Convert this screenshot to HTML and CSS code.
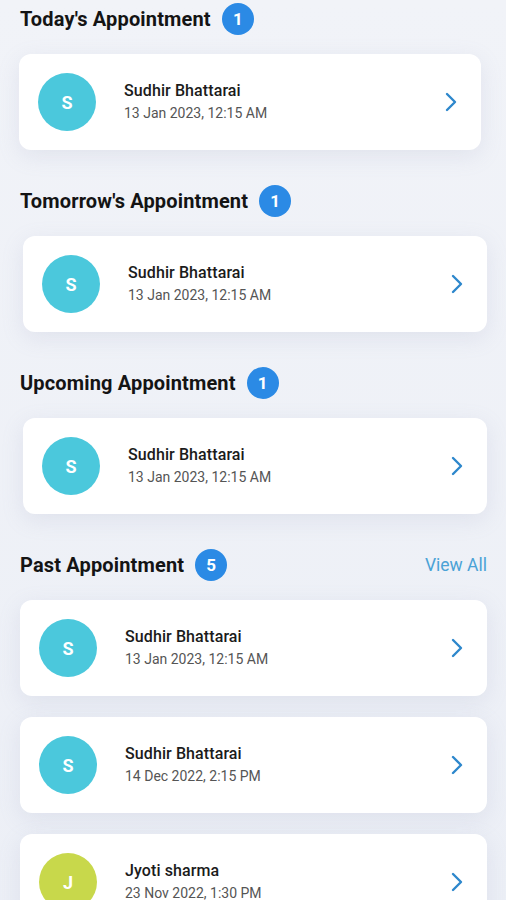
FILE: index.html
```html
<!DOCTYPE html>
<html lang="en">

<head>
    <meta charset="utf-8">
    <title>Appointments</title>
    <link rel="stylesheet" href="styles.css">
</head>

<body>
    <div id="app">
        <section class="section section--today">
            <div class="section-head">
                <h2>Today's Appointment</h2>
                <span class="badge">1</span>
            </div>
            <div class="card">
                <div class="avatar">S</div>
                <div class="info">
                    <div class="name">Sudhir Bhattarai</div>
                    <div class="date">13 Jan 2023, 12:15 AM</div>
                </div>
                <svg class="chevron" viewBox="0 0 12 20"><path d="M2 2l8 8-8 8"/></svg>
            </div>
        </section>

        <section class="section section--shifted">
            <div class="section-head">
                <h2>Tomorrow's Appointment</h2>
                <span class="badge">1</span>
            </div>
            <div class="card">
                <div class="avatar">S</div>
                <div class="info">
                    <div class="name">Sudhir Bhattarai</div>
                    <div class="date">13 Jan 2023, 12:15 AM</div>
                </div>
                <svg class="chevron" viewBox="0 0 12 20"><path d="M2 2l8 8-8 8"/></svg>
            </div>
        </section>

        <section class="section section--shifted">
            <div class="section-head">
                <h2>Upcoming Appointment</h2>
                <span class="badge">1</span>
            </div>
            <div class="card">
                <div class="avatar">S</div>
                <div class="info">
                    <div class="name">Sudhir Bhattarai</div>
                    <div class="date">13 Jan 2023, 12:15 AM</div>
                </div>
                <svg class="chevron" viewBox="0 0 12 20"><path d="M2 2l8 8-8 8"/></svg>
            </div>
        </section>

        <section class="section">
            <div class="section-head">
                <h2>Past Appointment</h2>
                <span class="badge">5</span>
                <a class="view-all" href="#">View All</a>
            </div>
            <div class="card">
                <div class="avatar">S</div>
                <div class="info">
                    <div class="name">Sudhir Bhattarai</div>
                    <div class="date">13 Jan 2023, 12:15 AM</div>
                </div>
                <svg class="chevron" viewBox="0 0 12 20"><path d="M2 2l8 8-8 8"/></svg>
            </div>
            <div class="card">
                <div class="avatar">S</div>
                <div class="info">
                    <div class="name">Sudhir Bhattarai</div>
                    <div class="date">14 Dec 2022, 2:15 PM</div>
                </div>
                <svg class="chevron" viewBox="0 0 12 20"><path d="M2 2l8 8-8 8"/></svg>
            </div>
            <div class="card">
                <div class="avatar avatar--lime">J</div>
                <div class="info">
                    <div class="name">Jyoti sharma</div>
                    <div class="date">23 Nov 2022, 1:30 PM</div>
                </div>
                <svg class="chevron" viewBox="0 0 12 20"><path d="M2 2l8 8-8 8"/></svg>
            </div>
        </section>
    </div>
</body>

</html>
```

FILE: styles.css
```css
body {
    margin: 0;
    font-family: Roboto, 'Noto Sans', sans-serif;
    background: linear-gradient(180deg, #f1f3f8 0%, #eceff6 100%);
    overflow: hidden;
}

#app {
    display: flex;
    flex-direction: column;
    gap: 35px;
    padding: 3px 19px 0 20px;
}

.section {
    display: flex;
    flex-direction: column;
    gap: 21px;
}

.section-head {
    display: flex;
    align-items: center;
    height: 32px;
    margin-bottom: -2px;
}

.section-head h2 {
    margin: 0;
    font-size: 20px;
    font-weight: 700;
    color: #141414;
    letter-spacing: 0.15px;
}

.badge {
    width: 32px;
    height: 32px;
    margin-left: 11px;
    border-radius: 50%;
    background-color: #2b8ae5;
    color: #fff;
    font-size: 17px;
    font-weight: 700;
    display: flex;
    align-items: center;
    justify-content: center;
}

.view-all {
    margin-left: auto;
    color: #4aa2d6;
    font-size: 17.5px;
    text-decoration: none;
}

.card {
    display: flex;
    align-items: center;
    height: 96px;
    padding: 0 24px 0 19px;
    background-color: #fff;
    border-radius: 12px;
    box-shadow: 0 6px 22px rgba(140, 152, 185, 0.16);
}

.section--today .card {
    margin: 0 6px 0 -1px;
}

.section--shifted .card {
    margin-left: 3px;
}

.avatar {
    width: 58px;
    height: 58px;
    flex-shrink: 0;
    border-radius: 50%;
    background-color: #4bc8dc;
    color: #fff;
    font-size: 18px;
    font-weight: 700;
    display: flex;
    align-items: center;
    justify-content: center;
}

.avatar--lime {
    background-color: #c8d84b;
}

.info {
    flex: 1;
    margin-left: 28px;
    margin-bottom: 2px;
    display: flex;
    flex-direction: column;
    gap: 5px;
}

.name {
    font-size: 16px;
    font-weight: 500;
    color: #1b1b1b;
    letter-spacing: 0.1px;
}

.date {
    font-size: 14px;
    color: #555;
}

.chevron {
    width: 12px;
    height: 20px;
    fill: none;
    stroke: #2d87cc;
    stroke-width: 2.4;
    stroke-linecap: round;
    stroke-linejoin: round;
}
```
